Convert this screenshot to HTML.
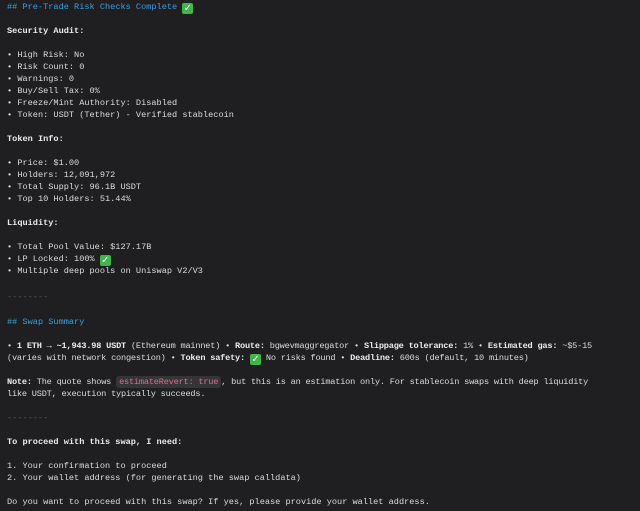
<!DOCTYPE html>
<html><head><meta charset="utf-8"><style>
body{margin:0;background:#1f1f21;width:640px;height:511px;overflow:hidden;position:relative;font-family:"Liberation Mono","DejaVu Sans Mono",monospace;font-size:8.6px;color:#dcdcdc}
.l{position:absolute;left:7px;white-space:pre;line-height:12px;height:12px}
.h{color:#3b9fdc}
b{font-weight:bold;color:#ececec}
.d{color:#555}
.ck{display:inline-block;width:11px;height:11px;background:#3fb54a;border-radius:2px;color:#fff;font-size:10px;line-height:11px;text-align:center;vertical-align:-2px;font-family:"DejaVu Sans",sans-serif;font-weight:bold}
.code{background:#353538;color:#e06c8a;padding:1px 3px;border-radius:3px}
.s{letter-spacing:-0.2px}
</style></head><body>
<div class="l h" style="top:1px">## Pre-Trade Risk Checks Complete <span class="ck">✓</span></div>
<div class="l" style="top:25px"><b>Security Audit:</b></div>
<div class="l" style="top:49px">• High Risk: No</div>
<div class="l" style="top:61px">• Risk Count: 0</div>
<div class="l" style="top:73px">• Warnings: 0</div>
<div class="l" style="top:85px">• Buy/Sell Tax: 0%</div>
<div class="l" style="top:97px">• Freeze/Mint Authority: Disabled</div>
<div class="l" style="top:109px">• Token: USDT (Tether) - Verified stablecoin</div>
<div class="l" style="top:133px"><b>Token Info:</b></div>
<div class="l" style="top:157px">• Price: $1.00</div>
<div class="l" style="top:169px">• Holders: 12,091,972</div>
<div class="l" style="top:181px">• Total Supply: 96.1B USDT</div>
<div class="l" style="top:193px">• Top 10 Holders: 51.44%</div>
<div class="l" style="top:217px"><b>Liquidity:</b></div>
<div class="l" style="top:241px">• Total Pool Value: $127.17B</div>
<div class="l" style="top:253px">• LP Locked: 100% <span class="ck">✓</span></div>
<div class="l" style="top:265px">• Multiple deep pools on Uniswap V2/V3</div>
<div class="l d" style="top:291px">--------</div>
<div class="l h" style="top:316px">## Swap Summary</div>
<div class="l s" style="top:340px">• <b>1 ETH → ~1,943.98 USDT</b> (Ethereum mainnet) • <b>Route:</b> bgwevmaggregator • <b>Slippage tolerance:</b> 1% • <b>Estimated gas:</b> ~$5-15</div>
<div class="l s" style="top:352px">(varies with network congestion) • <b>Token safety:</b> <span class="ck">✓</span> No risks found • <b>Deadline:</b> 600s (default, 10 minutes)</div>
<div class="l s" style="top:376px"><b>Note:</b> The quote shows <span class="code">estimateRevert: true</span>, but this is an estimation only. For stablecoin swaps with deep liquidity</div>
<div class="l s" style="top:388px">like USDT, execution typically succeeds.</div>
<div class="l d" style="top:412px">--------</div>
<div class="l" style="top:436px"><b>To proceed with this swap, I need:</b></div>
<div class="l" style="top:460px">1. Your confirmation to proceed</div>
<div class="l" style="top:472px">2. Your wallet address (for generating the swap calldata)</div>
<div class="l" style="top:496px">Do you want to proceed with this swap? If yes, please provide your wallet address.</div>
</body></html>
